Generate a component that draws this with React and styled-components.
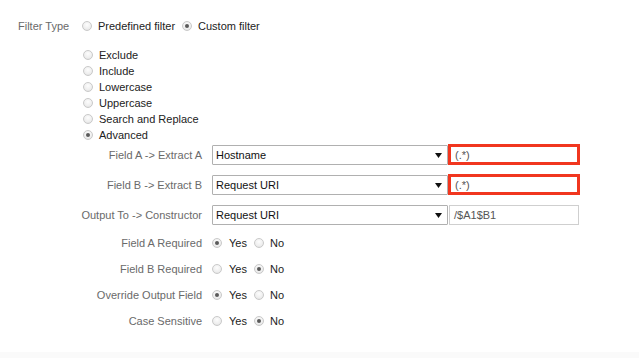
import React from "react";
import styled, { createGlobalStyle } from "styled-components";

const Global = createGlobalStyle`
  html, body { margin: 0; padding: 0; background: #fff; }
  body { font-family: "Liberation Sans", Arial, sans-serif; font-size: 11px; color: #333; }
`;

const Page = styled.div`
  min-height: 358px;
  display: flex;
  flex-direction: column;
  box-sizing: border-box;
`;

const Content = styled.div`
  padding: 18px 0 0 18px;
  display: flex;
  flex-direction: column;
`;

const TypeRow = styled.div`
  display: flex;
  align-items: center;
  height: 16px;
`;

const TypeLabel = styled.div`
  width: 64px;
  color: #6a6a6a;
`;

const Options = styled.div`
  display: flex;
  align-items: center;
  gap: 7px;
`;

const Option = styled.label`
  display: flex;
  align-items: center;
  gap: ${(p) => p.$gap || 6}px;
  color: #222;
  white-space: nowrap;
  height: 16px;
`;

const Circle = styled.span`
  width: 10px;
  height: 10px;
  border-radius: 50%;
  box-sizing: border-box;
  border: 1px solid #c9c9c9;
  background: radial-gradient(circle at 50% 35%, #fdfdfd 0%, #eeeeee 60%, #dcdcdc 100%);
  display: inline-flex;
  align-items: center;
  justify-content: center;
  flex: none;
  &::after {
    content: "";
    width: 4px;
    height: 4px;
    border-radius: 50%;
    background: ${(p) => (p.$on ? "#5a5a5a" : "transparent")};
  }
`;

const TypeList = styled.div`
  display: flex;
  flex-direction: column;
  margin: 13px 0 0 65px;
`;

const Grid = styled.div`
  display: grid;
  grid-template-columns: 184px auto;
  column-gap: 10px;
  row-gap: 10px;
  margin-top: 2px;
  align-items: center;
`;

const Label = styled.div`
  text-align: right;
  color: #6a6a6a;
  white-space: nowrap;
`;

const Controls = styled.div`
  display: flex;
  align-items: center;
  height: ${(p) => p.$h}px;
`;

const Select = styled.div`
  width: 236px;
  height: 20px;
  box-sizing: border-box;
  border: 1px solid #b0b0b0;
  border-radius: 1px;
  background: #fff;
  display: flex;
  align-items: center;
  justify-content: space-between;
  padding: 0 5px 0 3px;
  color: #111;
`;

const Arrow = styled.svg`
  width: 7px;
  height: 5px;
  flex: none;
`;

const Input = styled.div`
  box-sizing: border-box;
  display: flex;
  align-items: center;
  color: #555;
  background: #fff;
  ${(p) =>
    p.$highlight
      ? `width: 132px; height: 21px; margin: -1px 0 0 0; border: 3px solid #f1361f; padding-left: 4px;`
      : `width: 130px; height: 20px; margin-left: 1px; border: 1px solid #cfcfcf; padding-left: 4px;`}
`;

const RadioPair = styled.div`
  display: flex;
  align-items: center;
  gap: 7px;
`;

const Footer = styled.div`
  margin-top: auto;
  height: 6px;
  background: #fafafa;
`;

const Radio = ({ on, children, gap }) => (
  <Option $gap={gap}>
    <Circle $on={on} />
    {children}
  </Option>
);

const Dropdown = ({ value }) => (
  <Select>
    <span>{value}</span>
    <Arrow viewBox="0 0 7 5">
      <path d="M0 0 L7 0 L3.5 5 Z" fill="#111" />
    </Arrow>
  </Select>
);

const YesNo = ({ yes }) => (
  <RadioPair>
    <Radio on={yes} gap={7}>Yes</Radio>
    <Radio on={!yes} gap={6}>No</Radio>
  </RadioPair>
);

const types = ["Exclude", "Include", "Lowercase", "Uppercase", "Search and Replace", "Advanced"];

export default function App() {
  return (
    <>
      <Global />
      <Page>
        <Content>
          <TypeRow>
            <TypeLabel>Filter Type</TypeLabel>
            <Options>
              <Radio>Predefined filter</Radio>
              <Radio on>Custom filter</Radio>
            </Options>
          </TypeRow>
          <TypeList>
            {types.map((t) => (
              <Radio key={t} on={t === "Advanced"}>{t}</Radio>
            ))}
          </TypeList>
          <Grid>
            <Label>Field A -&gt; Extract A</Label>
            <Controls $h={20}>
              <Dropdown value="Hostname" />
              <Input $highlight>(.*)</Input>
            </Controls>
            <Label>Field B -&gt; Extract B</Label>
            <Controls $h={20}>
              <Dropdown value="Request URI" />
              <Input $highlight>(.*)</Input>
            </Controls>
            <Label>Output To -&gt; Constructor</Label>
            <Controls $h={20}>
              <Dropdown value="Request URI" />
              <Input>/$A1$B1</Input>
            </Controls>
            <Label>Field A Required</Label>
            <Controls $h={16}><YesNo yes /></Controls>
            <Label>Field B Required</Label>
            <Controls $h={16}><YesNo /></Controls>
            <Label>Override Output Field</Label>
            <Controls $h={16}><YesNo yes /></Controls>
            <Label>Case Sensitive</Label>
            <Controls $h={16}><YesNo /></Controls>
          </Grid>
        </Content>
        <Footer />
      </Page>
    </>
  );
}
